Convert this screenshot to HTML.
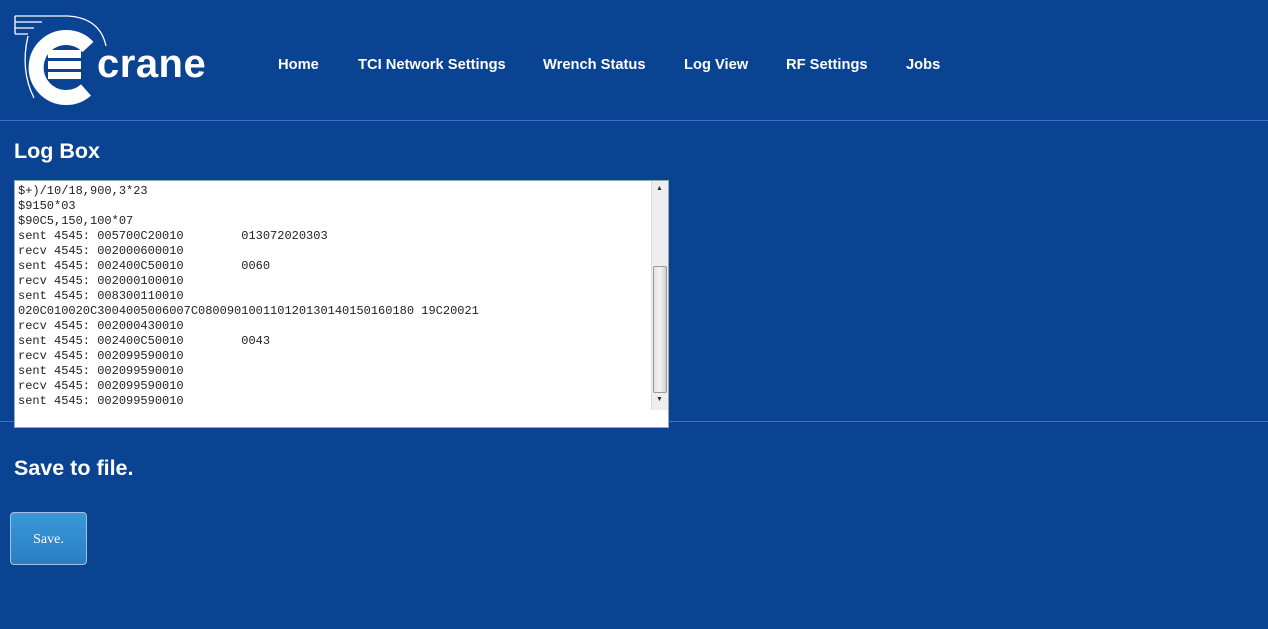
<!DOCTYPE html>
<html><head><meta charset="utf-8"><style>
html,body{margin:0;padding:0;width:1268px;height:629px;overflow:hidden;background:#0a4391;font-family:"Liberation Sans",Arial,sans-serif;color:#fff}
.nav a{position:absolute;top:57px;font-size:14.7px;font-weight:bold;color:#fff;text-decoration:none}
.hr{position:absolute;left:0;width:1268px;height:1px;background:#3d6ed0}
h2{position:absolute;margin:0;font-size:21.5px;font-weight:bold}
.box{position:absolute;left:14px;top:180px;width:653px;height:246px;background:#fff;border:1px solid #9aa;z-index:2}
.txt{position:absolute;left:3px;top:3px;font-family:"Liberation Mono",monospace;font-size:12px;line-height:15px;color:#222;white-space:pre}
.sb{position:absolute;right:0;top:0;width:16px;height:229px;background:#eeeef0;border-left:1px solid #ddd}
.thumb{position:absolute;left:1px;top:85px;width:12px;height:125px;background:linear-gradient(90deg,#e2e2e2,#f4f4f4,#d0d0d0);border:1px solid #999;border-radius:2px}
.btn{position:absolute;left:10px;top:512px;width:75px;height:51px;border:1px solid #a8c0e0;border-radius:4px;background:linear-gradient(#3a98d8,#2a7fc4);color:#fff;font-family:"Liberation Serif",serif;font-size:14px;text-align:center;line-height:53px}
</style></head><body>
<svg style="position:absolute;left:0;top:0" width="220" height="110" viewBox="0 0 220 110">
<path d="M15 16 H68 Q100 18 106 46" fill="none" stroke="#fff" stroke-width="1.3"/>
<path d="M15 22 H42 M15 28 H34 M15 34 H28 M15 16V34" fill="none" stroke="#fff" stroke-width="1.3"/>
<path d="M28 36 Q20 70 34 98" fill="none" stroke="#fff" stroke-width="1.3"/>
<path d="M88 47 A30 30 0 1 0 86 90" fill="none" stroke="#fff" stroke-width="15"/>
<rect x="48" y="50" width="33" height="8" fill="#fff"/><rect x="48" y="61" width="33" height="8" fill="#fff"/><rect x="48" y="72" width="33" height="7" fill="#fff"/>
<text x="97" y="77" font-family="Liberation Sans" font-weight="bold" font-size="40" fill="#fff" letter-spacing="0.5">crane</text>
</svg>
<div class="nav"><a style="left:278px">Home</a><a style="left:358px">TCI Network Settings</a><a style="left:543px">Wrench Status</a><a style="left:684px">Log View</a><a style="left:786px">RF Settings</a><a style="left:906px">Jobs</a></div>
<div class="hr" style="top:120px"></div>
<h2 style="left:14px;top:139px">Log Box</h2>
<div class="box"><div class="txt">$+)/10/18,900,3*23
$9150*03
$90C5,150,100*07
sent 4545: 005700C20010        013072020303
recv 4545: 002000600010
sent 4545: 002400C50010        0060
recv 4545: 002000100010
sent 4545: 008300110010
020C010020C3004005006007C080090100110120130140150160180 19C20021
recv 4545: 002000430010
sent 4545: 002400C50010        0043
recv 4545: 002099590010
sent 4545: 002099590010
recv 4545: 002099590010
sent 4545: 002099590010</div>
<div class="sb"><div style="position:absolute;top:4px;left:4px;font-size:7px;color:#333">▲</div><div class="thumb"></div><div style="position:absolute;top:215px;left:4px;font-size:7px;color:#333">▼</div></div></div>
<div class="hr" style="top:421px"></div>
<h2 style="left:14px;top:456px">Save to file.</h2>
<div class="btn">Save.</div>
</body></html>
